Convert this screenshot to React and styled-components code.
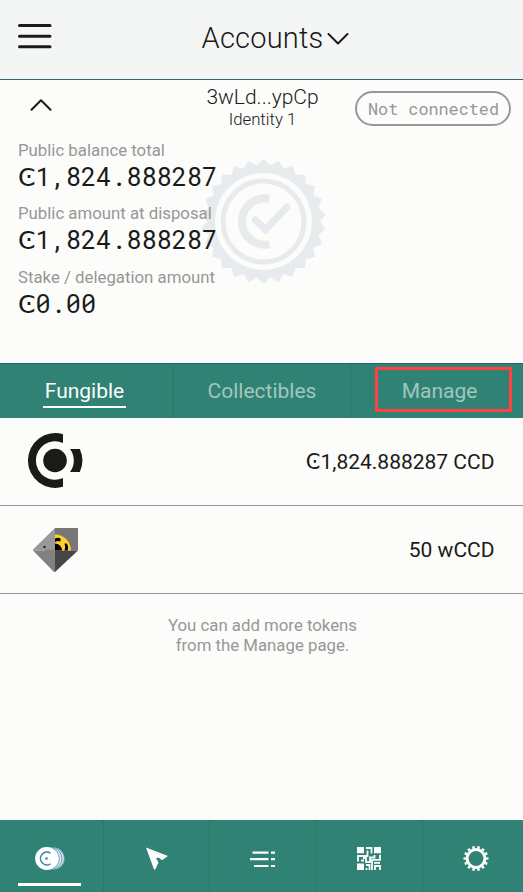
import React from 'react';
import styled, { createGlobalStyle } from 'styled-components';

const Global = createGlobalStyle`
  *, *::before, *::after { box-sizing: border-box; }
  body { margin: 0; background: #fcfcfa; color: #1a1a18; font-family: Roboto, sans-serif; }
  svg { display: block; flex: none; }
`;

const Page = styled.div`
  display: flex;
  flex-direction: column;
  width: 523px;
  height: 892px;
  overflow: hidden;
  background: #fcfcfa;
`;

const Header = styled.header`
  display: grid;
  grid-template-columns: 51px 1fr 51px;
  flex: none;
  height: 80px;
  background: #f4f6f6;
  border-bottom: 1px solid #365f70;
`;

const MenuButton = styled.div`
  padding: 24px 0 0 18px;
`;

const Title = styled.h1`
  display: flex;
  justify-content: center;
  gap: 4px;
  margin: 0;
  padding: 21px 0 0 28px;
  font-size: 29px;
  line-height: 35px;
  font-weight: 300;
  letter-spacing: 0.2px;
  svg { margin-top: 11px; }
`;

const AccountBar = styled.section`
  display: grid;
  grid-template-columns: 1fr 150px 1fr;
  flex: none;
  height: 60px;
`;

const Collapse = styled.div`
  padding: 18px 0 0 30px;
`;

const AccountName = styled.div`
  padding: 4px 0 0 2px;
  text-align: center;
  font-size: 21px;
  line-height: 26px;
  font-weight: 300;
`;

const Identity = styled.div`
  font-size: 16.8px;
  line-height: 19px;
`;

const Status = styled.div`
  justify-self: end;
  display: flex;
  align-items: center;
  justify-content: center;
  width: 156px;
  height: 35px;
  margin: 11px 12px 0 0;
  border: 2px solid #979797;
  border-radius: 18px;
  padding-left: 1px;
  color: #979797;
  font-family: "Roboto Mono", "Liberation Mono", monospace;
  font-size: 16.8px;
  white-space: nowrap;
`;

const Balances = styled.section`
  position: relative;
  flex: none;
  height: 223px;
  padding-left: 18px;
`;

const Seal = styled.svg`
  position: absolute;
  left: 201px;
  top: 19px;
`;

const Balance = styled.div`
  position: relative;
  height: 63.4px;
`;

const Label = styled.div`
  color: #979797;
  font-size: 16.8px;
  line-height: 20px;
`;

const Amount = styled.div`
  font-family: "Roboto Mono", "Liberation Mono", monospace;
  font-size: 25.2px;
  line-height: 34px;
`;

const Currency = styled.span`
  font-family: "DejaVu Sans", sans-serif;
  line-height: 0;
`;

const Tabs = styled.nav`
  display: grid;
  grid-template-columns: 174px 177px 172px;
  flex: none;
  height: 55px;
  border-top: 1px solid #2b5f77;
  background: #308274;
`;

const Tab = styled.div`
  display: flex;
  align-items: center;
  justify-content: center;
  border-right: ${p => (p.$last ? '0' : '1px solid #2c766a')};
  padding: ${p => (p.$last ? '0 0 3px 13px' : p.$active ? '1px 4px 0 0' : '1px 0 0')};
`;

const TabText = styled.span`
  height: 32px;
  padding: 1px 2px 0;
  border-bottom: 2px solid ${p => (p.$active ? '#ffffff' : 'transparent')};
  color: ${p => (p.$active ? '#fcfcfa' : '#a1c7bd')};
  font-size: 21px;
  line-height: 28px;
`;

const Highlight = styled.span`
  display: flex;
  align-items: center;
  justify-content: center;
  width: 137px;
  height: 45px;
  padding: 5px 8px 0 0;
  border: 3px solid #ff4141;
`;

const TokenRow = styled.div`
  display: flex;
  align-items: center;
  justify-content: space-between;
  flex: none;
  height: 88px;
  padding: 0 28.5px 0 27px;
  border-bottom: 1px solid #979797;
  font-size: 21px;
  line-height: 26px;
`;

const Hint = styled.p`
  flex: 1;
  margin: 0;
  padding: 21px 0 0 2px;
  color: #979797;
  text-align: center;
  font-size: 16.8px;
  line-height: 20px;
`;

const BottomNav = styled.nav`
  display: grid;
  grid-template-columns: 104px 106px 107px 106px 100px;
  flex: none;
  height: 72px;
  background: #308274;
`;

const NavItem = styled.div`
  display: flex;
  flex-direction: column;
  align-items: center;
  padding: 20px ${p => p.$inset || 0}px 0 0;
  border-right: 1px solid #2c766a;
  &:last-child { border-right: 0; padding: 20px 0 0 5px; }
`;

const ActiveBar = styled.div`
  width: 63px;
  height: 3px;
  margin-top: 7px;
  background: #ffffff;
`;

const sealPoints = Array.from({ length: 52 }, (_, i) => {
  const r = i % 2 ? 56.5 : 62.5;
  const a = (i * Math.PI) / 26 - Math.PI / 2;
  return `${(62.5 + r * Math.cos(a)).toFixed(2)},${(62.5 + r * Math.sin(a)).toFixed(2)}`;
}).join(' ');

const VerifiedSeal = () => (
  <Seal width="125" height="125" viewBox="0 0 125 125">
    <polygon points={sealPoints} fill="#e7ebee" />
    <circle cx="62.5" cy="62.5" r="48.5" fill="#fcfcfa" />
    <circle cx="62.5" cy="62.5" r="40.5" fill="none" stroke="#e7ebee" strokeWidth="5" />
    <path d="M68.5 39.6A23.3 23.3 0 1 0 68.5 85.4" fill="none" stroke="#e7ebee" strokeWidth="8" />
    <path d="M54.500 61L64.500 70.500L86 48" fill="none" stroke="#e7ebee" strokeWidth="7" strokeLinejoin="miter" strokeLinecap="round" />
  </Seal>
);

const ConcordiumLogo = () => (
  <svg width="56" height="57" viewBox="0 0.5 56 57" fill="#1a1a18">
    <circle cx="28" cy="28" r="11.800" />
    <path d="M36 1.700A27.400 27.400 0 1 0 36 54.300V45.500A19.200 19.200 0 1 1 36 10.500Z" />
    <path d="M43 16.500H52.800A27.400 27.400 0 0 1 52.800 39.500H43A19.200 19.200 0 0 0 43 16.500Z" />
  </svg>
);

const WrappedLogo = () => (
  <svg width="56" height="56" viewBox="0 0 56 56">
    <path d="M28 6H51V28.500H28Z" fill="#777777" />
    <path d="M28 6V28.500H6V27.500Z" fill="#999999" />
    <path d="M6 28.500H28V50H27Z" fill="#818181" />
    <path d="M28 28.500H51L28 50Z" fill="#464646" />
    <path d="M28 12.500A16 16 0 0 1 44 28.500H28Z" fill="#ffd02e" />
    <path d="M28 21.500A7 7 0 0 1 35 28.500H28Z" fill="#000" />
    <path d="M28 16.500Q31 15 33.500 16.500V19.500Q31 18.500 28 20ZM37.500 21.500H40Q41.800 25 40.800 28.500H37.500Q39 25 37.500 21.500Z" fill="#000" />
    <path d="M16.500 24H18.500V26H16.500Z" fill="#151515" />
    <path d="M18 28.300H28" stroke="#777047" strokeWidth=".7" />
  </svg>
);

const CoinsIcon = () => (
  <svg width="32" height="36" viewBox="0 0 32 36" stroke="#4d91ae" strokeWidth=".8">
    <circle cx="19.500" cy="18.500" r="11" fill="#d6dfe1" />
    <circle cx="17" cy="18.500" r="11" fill="#e5eaec" />
    <circle cx="14.500" cy="18.500" r="11" fill="#f4f6f6" />
    <circle cx="12.500" cy="18.500" r="11.400" fill="#fff" stroke="none" />
    <path d="M16.500 13.200A6.400 6.400 0 1 0 16.500 23.800" fill="none" stroke="#4383ad" strokeWidth="1.600" />
    <circle cx="12.500" cy="18.500" r="1.300" fill="#4383ad" stroke="none" />
  </svg>
);

const SendIcon = () => (
  <svg width="24" height="36" viewBox="0.5 0 24 36" fill="#fcfcfa">
    <path d="M1.500 7.500L23.500 16L17.500 20.200L14.500 17.700L11.500 18L14 22.500L10.800 29.500H9.500Z" />
  </svg>
);

const ActivityIcon = () => (
  <svg width="26" height="36" viewBox="0.5 0 26 36" stroke="#fcfcfa" strokeWidth="2.200">
    <path d="M3 12.600H19M21.500 12.600H25.500M0.500 19.200H19M21.500 19.200H25.500M4.500 26H19M21.500 26H25.500" />
  </svg>
);

const QrIcon = () => (
  <svg width="24" height="36" viewBox="0 0 24 36">
    <path d="M0 7H7V13.300H0ZM17 7H24V13.300H17ZM0 23.500H7V30H0Z" fill="#fcfcfa" />
    <path d="M9 8H14.500V13.500M10.500 10.500V16H1V21.500M4 20.500H7M17.500 15V17.500H13V22H9V18H6M16 19.800H23V14.800M9 25H12.500V30M9.500 28V30M15 19V26V30M17 22.800H23M18 30V26H23V30" fill="none" stroke="#fcfcfa" strokeWidth="1.800" />
  </svg>
);

const GearIcon = () => (
  <svg width="26" height="36" viewBox="0 0 26 36" fill="none" stroke="#fcfcfa">
    <circle cx="13" cy="18.500" r="8.900" strokeWidth="3" />
    <circle cx="13" cy="18.500" r="11.200" strokeWidth="2.600" pathLength="140" strokeDasharray="5 5" strokeDashoffset="2.500" />
  </svg>
);

const balances = [
  ['Public balance total', '1,824.888287'],
  ['Public amount at disposal', '1,824.888287'],
  ['Stake / delegation amount', '0.00'],
];

export default function App() {
  return (
    <Page>
      <Global />
      <Header>
        <MenuButton>
          <svg width="34" height="26" stroke="#1a1a18" strokeWidth="3" strokeLinecap="round">
            <path d="M1.500 1.600H32M1.500 12.200H32M1.500 22.800H32" />
          </svg>
        </MenuButton>
        <Title>
          Accounts
          <svg width="22" height="14" fill="none" stroke="#1a1a18" strokeWidth="2" strokeLinecap="round" strokeLinejoin="round">
            <path d="M1.500 2L11 11.500L20.500 2" />
          </svg>
        </Title>
      </Header>
      <AccountBar>
        <Collapse>
          <svg width="22" height="14" fill="none" stroke="#1a1a18" strokeWidth="2" strokeLinecap="round" strokeLinejoin="round">
            <path d="M1.500 11.700L11 2.200L20.500 11.700" />
          </svg>
        </Collapse>
        <AccountName>
          3wLd...ypCp
          <Identity>Identity 1</Identity>
        </AccountName>
        <Status>Not connected</Status>
      </AccountBar>
      <Balances>
        <VerifiedSeal />
        {balances.map(([label, value]) => (
          <Balance key={label}>
            <Label>{label}</Label>
            <Amount><Currency>Ͼ</Currency>{value}</Amount>
          </Balance>
        ))}
      </Balances>
      <Tabs>
        <Tab $active><TabText $active>Fungible</TabText></Tab>
        <Tab><TabText>Collectibles</TabText></Tab>
        <Tab $last><Highlight><TabText>Manage</TabText></Highlight></Tab>
      </Tabs>
      <TokenRow>
        <ConcordiumLogo />
        <span><Currency>Ͼ</Currency>1,824.888287 CCD</span>
      </TokenRow>
      <TokenRow><WrappedLogo /><span>50 wCCD</span></TokenRow>
      <Hint>You can add more tokens<br />from the Manage page.</Hint>
      <BottomNav>
        <NavItem $inset={4}><CoinsIcon /><ActiveBar /></NavItem>
        <NavItem><SendIcon /></NavItem>
        <NavItem><ActivityIcon /></NavItem>
        <NavItem $inset={1}><QrIcon /></NavItem>
        <NavItem><GearIcon /></NavItem>
      </BottomNav>
    </Page>
  );
}
